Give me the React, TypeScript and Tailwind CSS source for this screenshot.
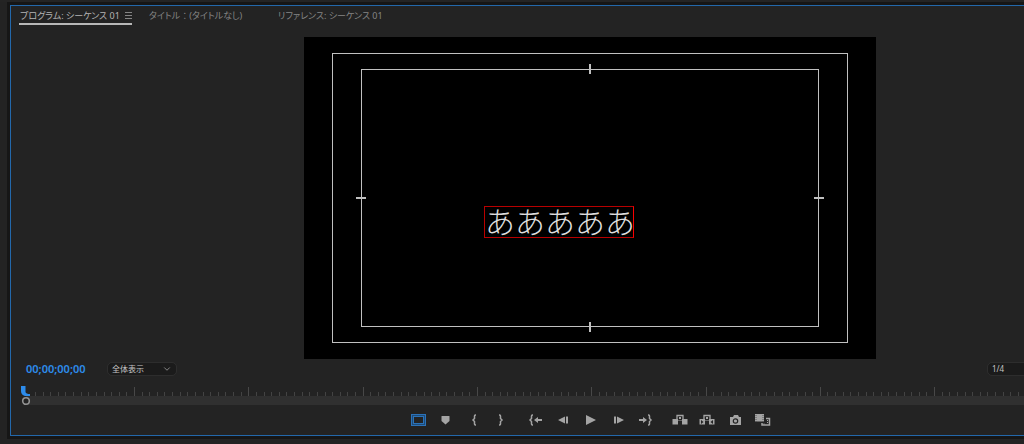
import type { ReactNode } from "react";
import { ChevronDown } from "lucide-react";

const tabs = ["プログラム: シーケンス 01", "タイトル ： (タイトルなし)", "リファレンス: シーケンス 01"];

// one tick every 7.62 units, a tall one every 15th
const ticks = Array.from({ length: 400 }, (_, i) => ({
  x: Math.round(5.7 + i * 7.62) + 0.5,
  major: i % 15 === 0 && i > 0,
})).slice(2);

const braceLeft = "M3 -5 H2.5 Q1.5 -5 1.5 -4 V-1.5 L0 0 L1.5 1.5 V4 Q1.5 5 2.5 5 H3";
const braceRight = "M-3 -5 H-2.5 Q-1.5 -5 -1.5 -4 V-1.5 L0 0 L-1.5 1.5 V4 Q-1.5 5 -2.5 5 H-3";

const Clip = ({ extract = false }: { extract?: boolean }) => (
  <>
    <path d="M-4 0 V-4.5 H2 V0" fill="none" stroke="currentColor" strokeWidth="1.3" />
    <path d="M-2 -3 H0 V-1 H-2Z M-2.5 0 H-1.5 V1 H-2.5Z M-.5 0 H.5 V1 H-.5Z" />
    <path d="M-8.5 -1 H-3 V4.5 H-8.5Z M1 -1 H6.5 V4.5 H1Z" />
    {extract && <path d="M-7 0 L-4.5 2 L-7 4Z M5 0 L2.5 2 L5 4Z" fill="#232323" />}
  </>
);

const groups: { label: string; icon: ReactNode }[][] = [
  [
    {
      label: "セーフマージン",
      icon: (
        <g fill="none" stroke="#2b72b8">
          <rect x="-6.5" y="-5.5" width="14" height="11" fill="#1d4b78" />
          <rect x="-4.5" y="-3.5" width="10" height="7" fill="#232323" />
        </g>
      ),
    },
    { label: "マーカーを追加", icon: <path d="M-3 -4 H4 Q4.5 -4 4.5 -3.5 V1 L.5 4.5 L-3.5 1 V-3.5 Q-3.5 -4 -3 -4Z" /> },
    { label: "インをマーク", icon: <path d={braceLeft} transform="translate(1 0)" fill="none" stroke="currentColor" strokeWidth="1.5" /> },
    { label: "アウトをマーク", icon: <path d={braceRight} transform="translate(3 0)" fill="none" stroke="currentColor" strokeWidth="1.5" /> },
  ],
  [
    {
      label: "インへ移動",
      icon: (
        <>
          <path d={braceLeft} transform="translate(-6 0)" fill="none" stroke="currentColor" strokeWidth="1.5" />
          <path d="M-2 0 L2 -3 V-1 H6 V1 H2 V3Z" />
        </>
      ),
    },
    { label: "1 フレーム前へ戻る", icon: <path d="M-5 0 L2 -3.5 V3.5Z M3 -3.5 H5 V3.5 H3Z" /> },
    { label: "再生", icon: <path d="M-4 -5 L6 0 L-4 5Z" /> },
    { label: "1 フレーム先へ進む", icon: <path d="M-3 -3.5 H-1 V3.5 H-3Z M0 -3.5 L7 0 L0 3.5Z" /> },
    {
      label: "アウトへ移動",
      icon: (
        <>
          <path d="M3 0 L-1 -3 V-1 H-5 V1 H-1 V3Z" />
          <path d={braceRight} transform="translate(7 0)" fill="none" stroke="currentColor" strokeWidth="1.5" />
        </>
      ),
    },
  ],
  [
    { label: "リフト", icon: <Clip /> },
    { label: "抽出", icon: <Clip extract /> },
    {
      label: "フレームを書き出し",
      icon: (
        <>
          <path d="M-5 -3 H-2 L-1 -5 H3 L4 -3 H6 V5 H-5Z" />
          <circle cx=".5" cy="1" r="2.2" fill="none" stroke="#232323" strokeWidth="1.2" />
        </>
      ),
    },
    {
      label: "比較表示",
      icon: (
        <>
          <path d="M-7 -6 H2 V1.5 H-7Z" />
          <path d="M-6 -5 V1.5 M1 -5 V1.5" stroke="#232323" strokeWidth=".6" strokeDasharray="1 1" />
          <path d="M4 -1.5 H7.5 V5 H0 V3" fill="none" stroke="currentColor" strokeWidth="1.5" />
          <path d="M5.5 0 V4 M2 3.5 V5" stroke="currentColor" strokeDasharray="1 1" />
        </>
      ),
    },
  ],
];

const SelectBox = ({ label, options }: { label: string; options: string[] }) => (
  <div className="relative w-[68px]">
    <select
      aria-label={label}
      className="block h-3 w-full appearance-none rounded-sm bg-[#1b1b1b] pl-1 text-[8px] leading-3 text-[#c4c4c4] outline outline-[#2d2d2d]"
    >
      {options.map((option) => (
        <option key={option}>{option}</option>
      ))}
    </select>
    <ChevronDown className="pointer-events-none absolute top-px right-1 size-2.5 text-[#9a9a9a]" />
  </div>
);

const Preview = () => (
  <div className="relative mx-auto mt-3 h-[322px] w-[572px] bg-black">
    <div className="absolute inset-x-7 inset-y-4 border border-[#c0c0c0]" />
    <div className="absolute inset-x-[57px] inset-y-8 border border-[#c0c0c0]">
      <span className="absolute -top-1.5 left-1/2 h-2.5 w-0.5 -translate-x-1/2 bg-[#c0c0c0]" />
      <span className="absolute -bottom-1.5 left-1/2 h-2.5 w-0.5 -translate-x-1/2 bg-[#c0c0c0]" />
      <span className="absolute top-1/2 -left-1.5 h-0.5 w-2.5 -translate-y-1/2 bg-[#c0c0c0]" />
      <span className="absolute top-1/2 -right-1.5 h-0.5 w-2.5 -translate-y-1/2 bg-[#c0c0c0]" />
    </div>
    {/* Title clip */}
    <p className="absolute top-[169px] left-[180px] h-8 w-[150px] border border-[#b80000] border-r-[#f80000] text-[30px] leading-[30px] font-light whitespace-nowrap text-[#dedede]">
      あああああ
    </p>
  </div>
);

const Ruler = () => (
  <div className="relative mt-2.5 ml-[3px] h-5">
    <svg className="block h-2.5 w-full overflow-hidden" shapeRendering="crispEdges" aria-hidden="true">
      {ticks.map((tick) => (
        <line key={tick.x} x1={tick.x} x2={tick.x} y1={tick.major ? 1 : 6} y2="10" stroke={tick.major ? "#484848" : "#434343"} />
      ))}
    </svg>
    <div className="ml-3 h-[9px] bg-[#303030]" />
    <svg className="absolute -top-px left-[7px] h-[22px] w-3" aria-hidden="true">
      <path d="M0 1 H4.5 V7 Q5 9 9 9 V11 H4 Q0 10 0 6Z" fill="#2d8ceb" />
      <circle cx="5" cy="16" r="3.3" fill="#232323" stroke="#929292" strokeWidth="1.6" />
    </svg>
  </div>
);

export default function App() {
  return (
    <div className="flex overflow-hidden bg-[#161616] font-['Noto_Sans','Noto_Sans_CJK_JP',sans-serif]">
      <div className="w-[7px] shrink-0 border-t-2 border-[#242424] bg-[#232323]" />
      <div className="ml-[3px] min-w-0 flex-1">
        <div className="-ml-[3px] h-0.5 bg-[#242424]" />
        {/* The panel runs on past the right edge of the window */}
        <main className="mt-[3px] -mr-[146px] border border-[#2368ab] bg-[#232323]">
          <nav className="flex gap-4 pl-2">
            {tabs.map((tab, index) => (
              <button
                key={tab}
                className={`flex h-[19px] w-[113px] items-center justify-between border-b-2 pt-0.5 pl-px text-[9px] leading-4 whitespace-nowrap [font-feature-settings:'palt'] ${
                  index === 0 ? "border-[#b8b8b8] text-[#b4b4b4]" : "border-transparent text-[#858585]"
                }`}
              >
                {tab}
                {index === 0 && (
                  <svg className="h-[7px] w-[7px]" shapeRendering="crispEdges" aria-hidden="true">
                    <path d="M0 .5 H7 M0 3.5 H7 M0 6.5 H7" stroke="#858585" />
                  </svg>
                )}
              </button>
            ))}
          </nav>
          <Preview />
          <div className="mt-[3px] flex h-3.5 items-center pr-[113px] pl-[15px]">
            <span className="w-[82px] text-[11px] leading-[14px] font-semibold text-[#2d8ceb]">00;00;00;00</span>
            <SelectBox label="ズームレベル" options={["全体表示", "50%", "100%"]} />
            <div className="ml-auto">
              <SelectBox label="再生時の解像度" options={["1/4", "1/2", "フル画質"]} />
            </div>
          </div>
          <Ruler />
          <div className="mt-[5px] mb-1.5 flex h-[18px] items-center justify-center gap-2.5 text-[#a4a4a4]">
            {groups.map((group, index) => (
              <div key={index} className="flex">
                {group.map(({ label, icon }) => (
                  <button key={label} aria-label={label} className="flex w-[27px] justify-center">
                    <svg className="h-4 w-6" viewBox="-12 -8 24 16" fill="currentColor" aria-hidden="true">
                      {icon}
                    </svg>
                  </button>
                ))}
              </div>
            ))}
          </div>
        </main>
        <div className="mt-[3px] -ml-2.5 h-[5px] bg-[#232323]" />
      </div>
    </div>
  );
}
